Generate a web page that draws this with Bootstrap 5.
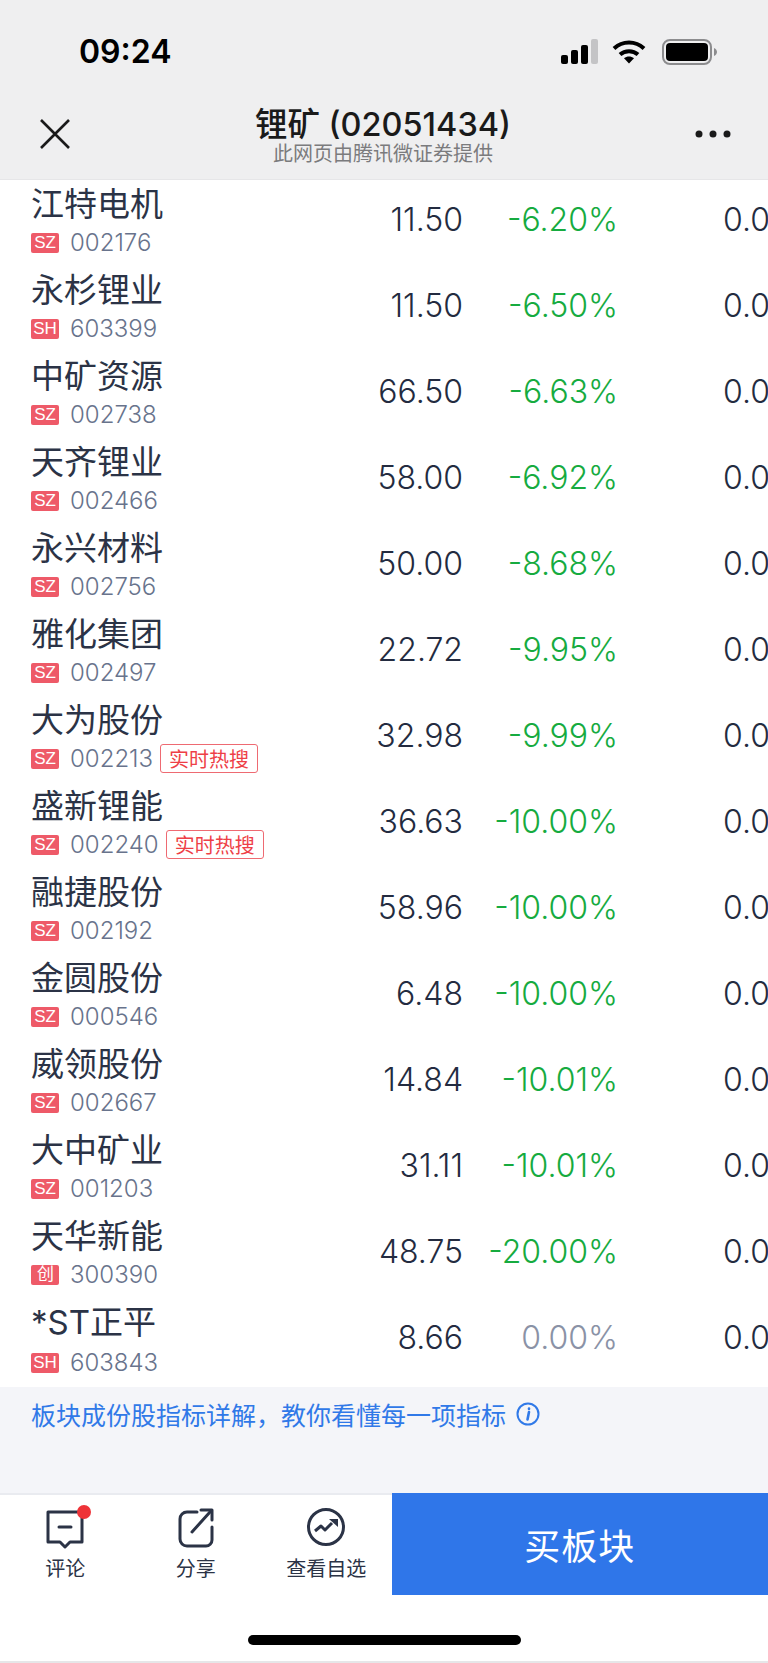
<!DOCTYPE html>
<html lang="zh-CN">
<head>
  <meta charset="UTF-8" />
  <meta name="viewport" content="width=device-width, initial-scale=1.0"/>
  <title>锂矿 (02051434)</title>
  <link href="https://cdn.jsdelivr.net/npm/bootstrap@5.3.0/dist/css/bootstrap.min.css" rel="stylesheet">
  <style>
    html, body { height:1663px; overflow:hidden; }
    body { font-family:Inter,"Noto Sans CJK SC",sans-serif; background:#fff; color:#2b3346; }
    .page { height:1663px; width:768px; }
    .top-head { height:180px; background:#efeff0; border-bottom:1px solid #e6e6e8; flex:none; }
    .status-row { height:88px; padding:15px 50px 0 79px; }
    .clock { font-size:32px; font-weight:600; color:#000; line-height:1; }
    .wifi-mark { margin-left:13px; }
    .nav-row { height:89px; padding:2px 37px 0 39px; }
    .head-title { font-size:32.500px; font-weight:500; color:#1a1a1a; line-height:38px; margin-top:4px; }
    .head-sub { font-size:20px; color:#7b7b7d; line-height:22px; margin-top:-1px; }
    .stock-list { flex:none; height:1207px; overflow:hidden; }
    .stock-row { height:86px; padding-left:31px; white-space:nowrap; }
    .stock-row:first-child { margin-top:-3px; }
    .col-name { width:282px; padding-top:5.500px; flex:none; align-self:flex-start; }
    .stock-name { font-size:33px; line-height:38px; margin-bottom:4px; font-family:"Noto Sans CJK SC",sans-serif; font-weight:400; }
    .stock-name .latin { font-family:Inter,sans-serif; }
    .stock-line { height:36px; }
    .mkt-tag { width:28px; height:20px; background:#ee5a68; color:#fff; border-radius:2px; font-size:17px; line-height:20px; text-align:center; font-family:"Liberation Sans",sans-serif; }
    .stock-code { font-size:24px; color:#68738c; margin-left:11px; font-family:Inter,sans-serif; font-weight:300; }
    .hot-tag { margin-left:7px; width:98px; height:29px; border:1px solid #ee6a72; border-radius:3px; color:#ee3f47; font-size:20px; line-height:27px; text-align:center; font-family:"Noto Sans CJK SC",sans-serif; }
    .col-price, .col-pct { text-align:right; flex:none; font-size:32px; font-weight:300; }
    .col-price { width:150px; color:#232b40; }
    .col-pct { width:155px; }
    .pct-down { color:#16ab3f; }
    .pct-flat { color:#8a92a6; }
    .col-extra { margin-left:105px; font-size:32px; font-weight:300; flex:none; color:#232b40; }
    .note-band { height:106px; background:#f4f5f9; flex:none; padding:11px 0 0 31px; color:#3079e8; font-size:25px; line-height:32px; font-family:"Noto Sans CJK SC",sans-serif; }
    .note-band svg { margin-left:10px; }
    .bottom-bar { height:102px; border-top:2px solid #e9ebf0; flex:none; }
    .bar-tab { width:130.500px; flex:none; color:#2b3346; font-size:20px; position:relative; font-family:"Noto Sans CJK SC",sans-serif; }
    .bar-tab svg { display:block; height:44px; margin-top:10px; margin-bottom:5px; }
    .bar-tab span { line-height:28px; }
    .red-dot { position:absolute; top:10px; left:77px; width:14px; height:14px; border-radius:50%; background:#ee3338; }
    .buy-btn { flex:1; margin-top:-2px; background:#2f76e9; color:#fff; border:0; border-radius:0; font-size:36px; letter-spacing:1px; font-family:"Noto Sans CJK SC",sans-serif; }
    .home-area { flex:1; border-bottom:2px solid #e6e6e8; }
    .home-pill { width:273px; height:10px; background:#000; border-radius:5px; margin:40px 0 0 248px; }
  </style>
</head>
<body>
  <div class="page d-flex flex-column">
    <header class="top-head">
      <div class="status-row d-flex justify-content-between align-items-center">
        <div class="clock">09:24</div>
        <div class="d-flex align-items-center">
          <svg width="38" height="25" viewBox="0 0 38 25"><rect x="0" y="16" width="7" height="9" rx="2" fill="#000"/><rect x="10" y="11" width="7" height="14" rx="2" fill="#000"/><rect x="20" y="6" width="7" height="19" rx="2" fill="#000"/><rect x="30" y="0" width="7" height="25" rx="2" fill="#c4c4c6"/></svg>
          <svg class="wifi-mark" width="34" height="25" viewBox="0 0 34 25" fill="none" stroke="#000" stroke-width="4"><path d="M2 9.500C10.500 1.500 23.500 1.500 32 9.500"/><path d="M8 15.500C13 11 21 11 26 15.500"/><path d="M17 24.500l-5-5.200c3-2.300 7-2.300 10 0z" fill="#000" stroke="none"/></svg>
          <svg class="ms-3" width="56" height="26" viewBox="0 0 56 26"><rect x="1" y="1" width="48" height="24" rx="7" fill="none" stroke="#8c8c8e" stroke-width="2"/><rect x="4" y="4" width="42" height="18" rx="4" fill="#000"/><path d="M52 9c2 1 3 2.500 3 4s-1 3-3 4z" fill="#8c8c8e"/></svg>
        </div>
      </div>
      <div class="nav-row d-flex justify-content-between align-items-center">
        <svg width="32" height="32" viewBox="0 0 32 32" stroke="#1a1a1a" stroke-width="2.600" fill="none"><path d="M2 2l28 28M30 2L2 30"/></svg>
        <div class="text-center">
          <div class="head-title">锂矿 (02051434)</div>
          <div class="head-sub">此网页由腾讯微证券提供</div>
        </div>
        <svg width="36" height="8" viewBox="0 0 36 8" fill="#1a1a1a"><circle cx="4" cy="4" r="3.500"/><circle cx="18" cy="4" r="3.500"/><circle cx="32" cy="4" r="3.500"/></svg>
      </div>
    </header>

    <main class="stock-list">
      <div class="stock-row d-flex align-items-center"><div class="col-name"><div class="stock-name">江特电机</div><div class="stock-line d-flex align-items-center"><span class="mkt-tag">SZ</span><span class="stock-code">002176</span></div></div><div class="col-price">11.50</div><div class="col-pct pct-down">-6.20%</div><div class="col-extra">0.00%</div></div>
      <div class="stock-row d-flex align-items-center"><div class="col-name"><div class="stock-name">永杉锂业</div><div class="stock-line d-flex align-items-center"><span class="mkt-tag">SH</span><span class="stock-code">603399</span></div></div><div class="col-price">11.50</div><div class="col-pct pct-down">-6.50%</div><div class="col-extra">0.00%</div></div>
      <div class="stock-row d-flex align-items-center"><div class="col-name"><div class="stock-name">中矿资源</div><div class="stock-line d-flex align-items-center"><span class="mkt-tag">SZ</span><span class="stock-code">002738</span></div></div><div class="col-price">66.50</div><div class="col-pct pct-down">-6.63%</div><div class="col-extra">0.00%</div></div>
      <div class="stock-row d-flex align-items-center"><div class="col-name"><div class="stock-name">天齐锂业</div><div class="stock-line d-flex align-items-center"><span class="mkt-tag">SZ</span><span class="stock-code">002466</span></div></div><div class="col-price">58.00</div><div class="col-pct pct-down">-6.92%</div><div class="col-extra">0.00%</div></div>
      <div class="stock-row d-flex align-items-center"><div class="col-name"><div class="stock-name">永兴材料</div><div class="stock-line d-flex align-items-center"><span class="mkt-tag">SZ</span><span class="stock-code">002756</span></div></div><div class="col-price">50.00</div><div class="col-pct pct-down">-8.68%</div><div class="col-extra">0.00%</div></div>
      <div class="stock-row d-flex align-items-center"><div class="col-name"><div class="stock-name">雅化集团</div><div class="stock-line d-flex align-items-center"><span class="mkt-tag">SZ</span><span class="stock-code">002497</span></div></div><div class="col-price">22.72</div><div class="col-pct pct-down">-9.95%</div><div class="col-extra">0.00%</div></div>
      <div class="stock-row d-flex align-items-center"><div class="col-name"><div class="stock-name">大为股份</div><div class="stock-line d-flex align-items-center"><span class="mkt-tag">SZ</span><span class="stock-code">002213</span><span class="hot-tag">实时热搜</span></div></div><div class="col-price">32.98</div><div class="col-pct pct-down">-9.99%</div><div class="col-extra">0.00%</div></div>
      <div class="stock-row d-flex align-items-center"><div class="col-name"><div class="stock-name">盛新锂能</div><div class="stock-line d-flex align-items-center"><span class="mkt-tag">SZ</span><span class="stock-code">002240</span><span class="hot-tag">实时热搜</span></div></div><div class="col-price">36.63</div><div class="col-pct pct-down">-10.00%</div><div class="col-extra">0.00%</div></div>
      <div class="stock-row d-flex align-items-center"><div class="col-name"><div class="stock-name">融捷股份</div><div class="stock-line d-flex align-items-center"><span class="mkt-tag">SZ</span><span class="stock-code">002192</span></div></div><div class="col-price">58.96</div><div class="col-pct pct-down">-10.00%</div><div class="col-extra">0.00%</div></div>
      <div class="stock-row d-flex align-items-center"><div class="col-name"><div class="stock-name">金圆股份</div><div class="stock-line d-flex align-items-center"><span class="mkt-tag">SZ</span><span class="stock-code">000546</span></div></div><div class="col-price">6.48</div><div class="col-pct pct-down">-10.00%</div><div class="col-extra">0.00%</div></div>
      <div class="stock-row d-flex align-items-center"><div class="col-name"><div class="stock-name">威领股份</div><div class="stock-line d-flex align-items-center"><span class="mkt-tag">SZ</span><span class="stock-code">002667</span></div></div><div class="col-price">14.84</div><div class="col-pct pct-down">-10.01%</div><div class="col-extra">0.00%</div></div>
      <div class="stock-row d-flex align-items-center"><div class="col-name"><div class="stock-name">大中矿业</div><div class="stock-line d-flex align-items-center"><span class="mkt-tag">SZ</span><span class="stock-code">001203</span></div></div><div class="col-price">31.11</div><div class="col-pct pct-down">-10.01%</div><div class="col-extra">0.00%</div></div>
      <div class="stock-row d-flex align-items-center"><div class="col-name"><div class="stock-name">天华新能</div><div class="stock-line d-flex align-items-center"><span class="mkt-tag">创</span><span class="stock-code">300390</span></div></div><div class="col-price">48.75</div><div class="col-pct pct-down">-20.00%</div><div class="col-extra">0.00%</div></div>
      <div class="stock-row d-flex align-items-center"><div class="col-name"><div class="stock-name"><span class="latin">*ST</span>正平</div><div class="stock-line d-flex align-items-center"><span class="mkt-tag">SH</span><span class="stock-code">603843</span></div></div><div class="col-price">8.66</div><div class="col-pct pct-flat">0.00%</div><div class="col-extra">0.00%</div></div>
    </main>

    <div class="note-band d-flex align-items-start">
      板块成份股指标详解，教你看懂每一项指标
      <svg width="24" height="32" viewBox="0 0 24 32" fill="none" stroke="#3079e8" stroke-width="2"><circle cx="12" cy="16" r="10.500"/><path d="M13 10.500v.5M13 14l-1.500 7.500" stroke-width="2.600" stroke-linecap="round"/></svg>
    </div>

    <div class="bottom-bar d-flex">
      <div class="bar-tab d-flex flex-column align-items-center">
        <svg width="38" height="44" viewBox="0 0 38 44" fill="none" stroke="#2b3346" stroke-width="3" stroke-linejoin="round"><path d="M2 7h34v30H24l-5 5-5-5H2z"/><path d="M13 22h12" stroke-linecap="round"/></svg>
        <i class="red-dot"></i>
        <span>评论</span>
      </div>
      <div class="bar-tab d-flex flex-column align-items-center">
        <svg width="38" height="44" viewBox="0 0 38 44" fill="none" stroke="#2b3346" stroke-width="3" stroke-linecap="round" stroke-linejoin="round"><path d="M20 7H10a7 7 0 0 0-7 7v20a7 7 0 0 0 7 7h19a6 6 0 0 0 6-6V22"/><path d="M15 27L33 7"/><path d="M24 5h11v10"/></svg>
        <span>分享</span>
      </div>
      <div class="bar-tab d-flex flex-column align-items-center">
        <svg width="38" height="44" viewBox="0 0 38 44" fill="none" stroke="#2b3346" stroke-width="3"><circle cx="19" cy="22" r="17.500"/><path d="M8 26l6-5 4 4 7-7" stroke-linejoin="round"/><path d="M22 14h9v8z" fill="#2b3346" stroke="none"/></svg>
        <span>查看自选</span>
      </div>
      <button class="btn buy-btn">买板块</button>
    </div>

    <div class="home-area"><div class="home-pill"></div></div>
  </div>
  <script src="https://cdn.jsdelivr.net/npm/bootstrap@5.3.0/dist/js/bootstrap.bundle.min.js"></script>
</body>
</html>
